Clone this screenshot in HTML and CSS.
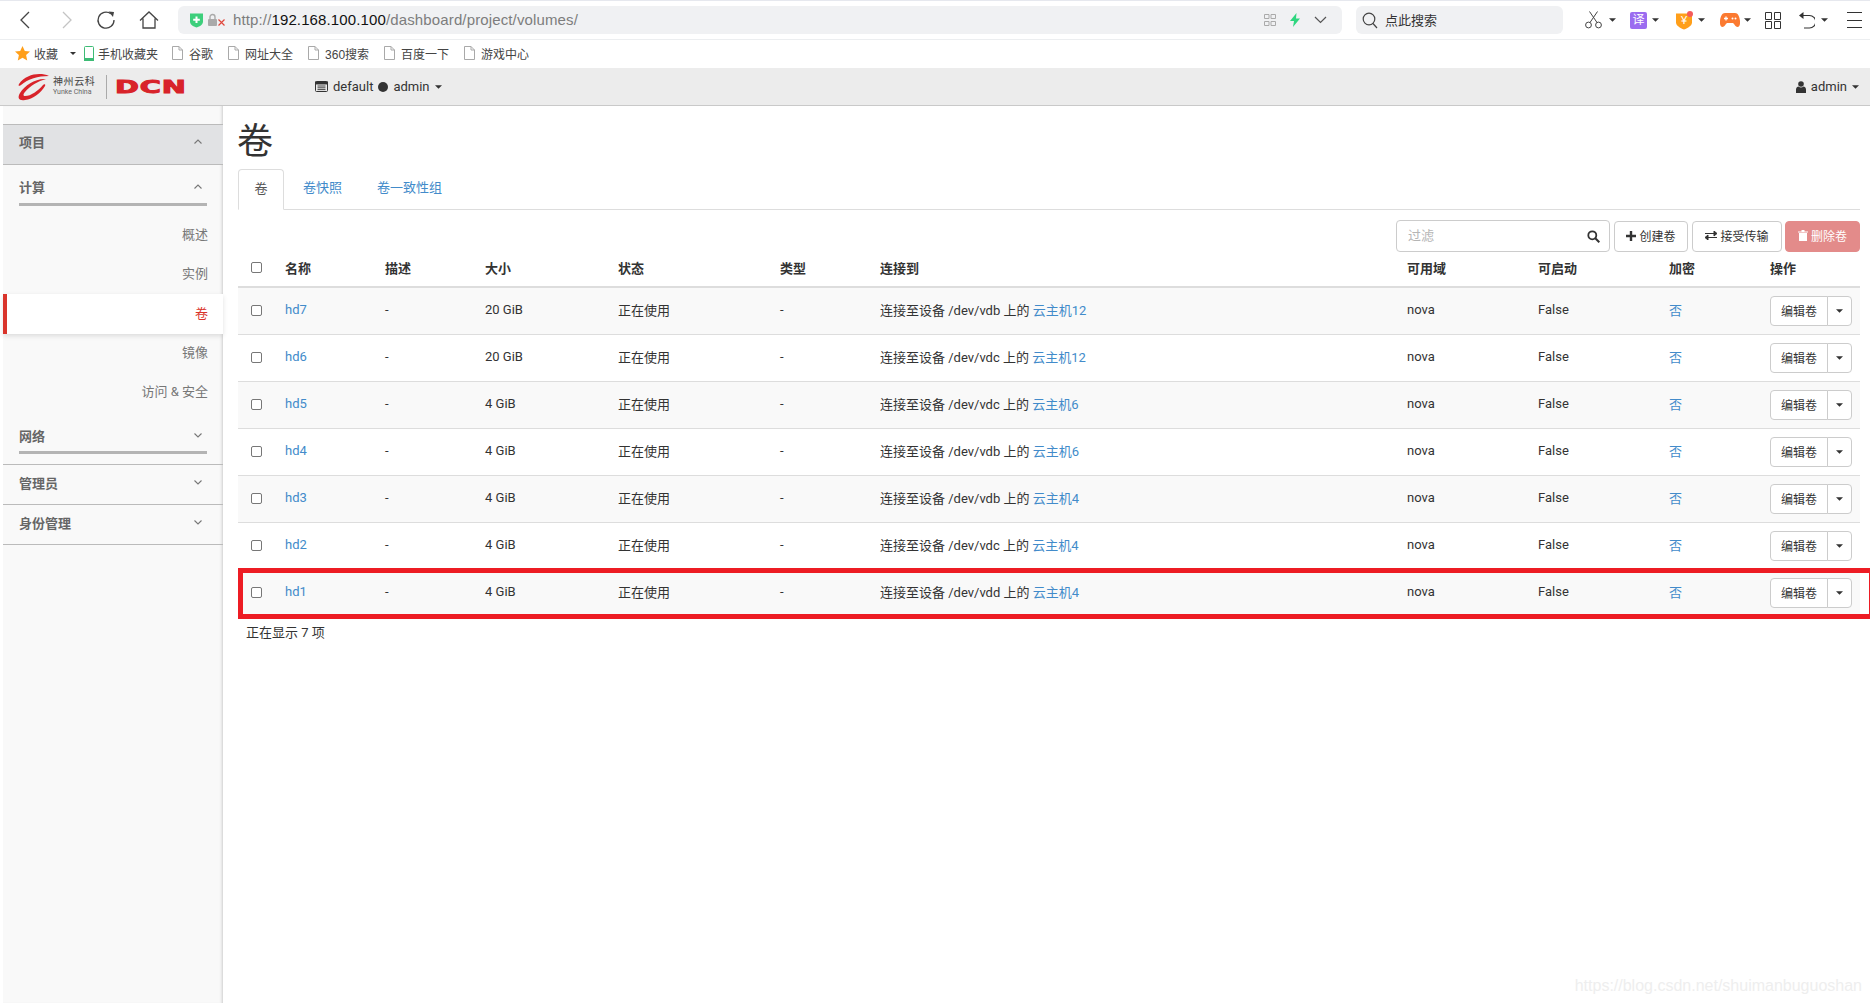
FILE: index.html
```html
<!DOCTYPE html>
<html lang="zh-CN">
<head>
    <meta charset="UTF-8" />
    <title>卷 - OpenStack Dashboard</title>
    <link rel="stylesheet" href="styles.css">
</head>
<body>
    <svg class="defs" width="0" height="0">
        <symbol id="doc" viewBox="0 0 11 14"><path d="M.5.5h6.500l3.500 3.500v9.500h-10z M7 .5v3.500h3.500" fill="none" stroke="#a9a9a9"/></symbol>
        <symbol id="chev-up" viewBox="0 0 8 5"><path d="M.5 4.500 4 1l3.500 3.500" fill="none" stroke="#777" stroke-width="1.100"/></symbol>
        <symbol id="chev-down" viewBox="0 0 8 5"><path d="M.5.500 4 4 7.500.5" fill="none" stroke="#777" stroke-width="1.100"/></symbol>
        <symbol id="caret" viewBox="0 0 8 4"><path d="M0 0h8L4 4z" fill="#333"/></symbol>
    </svg>

    <!-- BROWSER TOOLBAR -->
    <div class="browser-bar">
        <svg class="ico-back" width="10" height="18" viewBox="0 0 10 18"><path d="M9 1 1 9l8 8" fill="none" stroke="#444" stroke-width="1.300"/></svg>
        <svg class="ico-fwd" width="10" height="18" viewBox="0 0 10 18"><path d="m1 1 8 8-8 8" fill="none" stroke="#c4c4c4" stroke-width="1.300"/></svg>
        <svg class="ico-reload" width="20" height="20" viewBox="0 0 20 20"><path d="M14.800 3.800A8 8 0 1 0 18 10" fill="none" stroke="#444" stroke-width="1.300"/><path d="m12.500 1.500 5.500 .5-1 5z" fill="#444"/></svg>
        <svg class="ico-home" width="20" height="18" viewBox="0 0 20 18"><path d="M1 9.500 10 1l9 8.500M4 7.500v9.500h12V7.500" fill="none" stroke="#444" stroke-width="1.300"/></svg>
        <div class="url-bar">
            <svg class="ico-shield" width="15" height="16" viewBox="0 0 15 16"><path d="M1 1.500h13v8c0 3-3 5-6.500 6C4 14.500 1 12.500 1 9.500z" fill="#3dcf7c"/><path d="M7.500 4.500v6.500M4.200 7.700h6.600" stroke="#fff" stroke-width="2"/></svg>
            <svg class="ico-lock" width="18" height="14" viewBox="0 0 18 14"><rect x="0" y="6" width="9" height="7" rx="1" fill="#aaa"/><path d="M2 6V4a2.500 2.500 0 0 1 5 0v2" fill="none" stroke="#aaa" stroke-width="1.400"/><path d="m10.500 6.500 6 6m0-6-6 6" stroke="#e0473c" stroke-width="1.200"/></svg>
            <span class="url-text">http://<b>192.168.100.100</b>/dashboard/project/volumes/</span>
            <span class="url-right">
                <svg width="12" height="12" viewBox="0 0 12 12"><path d="M.5.500h4.500v4h-4.500zM7 .5h4.500v4H7zM.5 7.500h4.500v4h-4.500zM7 7.500h4.500v4H7z" fill="none" stroke="#aaa"/></svg>
                <svg width="10" height="14" viewBox="0 0 10 14"><path d="M6.500 0 0 8h4l-1 6 7-8.500H6z" fill="#2fd67f"/></svg>
                <svg width="13" height="8" viewBox="0 0 13 8"><path d="m1 1 5.500 5.500L12 1" fill="none" stroke="#555" stroke-width="1.200"/></svg>
            </span>
        </div>
        <div class="search-box">
            <svg width="16" height="17" viewBox="0 0 16 17"><circle cx="7" cy="7" r="5.800" fill="none" stroke="#444" stroke-width="1.200"/><path d="m11 11.500 4 4.500" stroke="#444" stroke-width="1.200"/></svg>
            <span>点此搜索</span>
        </div>
        <div class="tools">
            <span class="tool tool-cut"><svg width="17" height="18" viewBox="0 0 17 18"><circle cx="3.500" cy="14" r="2.900" fill="none" stroke="#444"/><circle cx="13.500" cy="14" r="2.900" fill="none" stroke="#444"/><path d="M5 11.500 12.500.5M12 11.500 4.500.5" stroke="#444" fill="none"/></svg><svg class="tool-caret"><use href="#caret"/></svg></span>
            <span class="tool tool-trans"><span class="trans-box">译</span><svg class="tool-caret"><use href="#caret"/></svg></span>
            <span class="tool tool-coin"><svg width="18" height="19" viewBox="0 0 18 19"><path d="M1 2.500h16v9c0 3-4 5.500-8 7-4-1.500-8-4-8-7z" fill="#ff9f1a"/><circle cx="15" cy="3" r="3" fill="#f45b5b"/><text x="9" y="13" class="coin-mark">¥</text></svg><svg class="tool-caret"><use href="#caret"/></svg></span>
            <span class="tool tool-game"><svg width="20" height="16" viewBox="0 0 20 16"><path d="M5 1h10c3 0 4.500 3.500 5 8 .3 3.500-.5 6-2.500 6-2 0-3-3-4.500-4H7c-1.500 1-2.500 4-4.500 4C.5 15-.3 12.500 0 9c.5-4.500 2-8 5-8z" fill="#fb7a31"/><path d="M6 4.500v4M4 6.500h4" stroke="#fff" stroke-width="1.300"/><circle cx="12.500" cy="6.500" r="1" fill="#fff"/><circle cx="15.500" cy="6.500" r="1" fill="#fff"/></svg><svg class="tool-caret"><use href="#caret"/></svg></span>
            <span class="tool tool-grid"><svg width="16" height="17" viewBox="0 0 16 17"><path d="M.5.500h6v7h-6zM9.500.500h6v7h-6zM.5 9.500h6v7h-6zM9.500 9.500h6v7h-6z" fill="none" stroke="#333"/></svg></span>
            <span class="tool tool-undo"><svg width="16" height="17" viewBox="0 0 16 17"><path d="M3 3.500h7.500a6 6 0 0 1 0 12.500H5" fill="none" stroke="#333" stroke-width="1.200"/><path d="M4.500 0 0 3.500 4.500 7z" fill="#333"/></svg><svg class="tool-caret"><use href="#caret"/></svg></span>
            <span class="tool tool-menu"><i></i><i></i><i></i></span>
        </div>
    </div>

    <!-- BOOKMARKS -->
    <div class="bookmarks">
        <span class="bm bm-fav">
            <svg width="15" height="15" viewBox="0 0 15 15"><path d="m7.500 0 2.300 5 5.200.6-3.900 3.500 1.100 5.400-4.700-2.800-4.700 2.800 1.100-5.400L0 5.600 5.200 5z" fill="#ff9f1a"/></svg>收藏
            <svg class="bm-caret"><use href="#caret"/></svg>
        </span>
        <span class="bm bm-phone"><svg width="10" height="15" viewBox="0 0 10 15"><rect x=".5" y=".5" width="9" height="14" rx="1" fill="none" stroke="#3dbb75"/><rect x="0" y="12" width="10" height="3" fill="#3dbb75"/></svg>手机收藏夹</span>
        <span class="bm"><svg width="11" height="14"><use href="#doc"/></svg>谷歌</span>
        <span class="bm"><svg width="11" height="14"><use href="#doc"/></svg>网址大全</span>
        <span class="bm"><svg width="11" height="14"><use href="#doc"/></svg>360搜索</span>
        <span class="bm"><svg width="11" height="14"><use href="#doc"/></svg>百度一下</span>
        <span class="bm"><svg width="11" height="14"><use href="#doc"/></svg>游戏中心</span>
    </div>

    <!-- DASHBOARD NAV -->
    <div class="topnav">
        <div class="logo">
            <svg width="34" height="28" viewBox="0 0 34 28"><path d="M33 3C24-1 10 1 3 11c-1 2 0 2.500 2 1C12 6 22 3 33 3z" fill="#d8232a"/><path d="M30 6C20 5 9 12 4 20c-3 5-1 8 5 7 8-1 16-7 20-14 1-2-1-2-2-1-5 6-12 11-18 11-2 0-2-2 0-4C14 13 22 8 30 6z" fill="#d8232a"/></svg>
            <div class="logo-cn">
                <span class="logo-name">神州云科</span>
                <span class="logo-en">Yunke China</span>
            </div>
            <span class="logo-sep"></span>
            <span class="logo-dcn">DCN</span>
        </div>
        <div class="project-picker">
            <svg width="13" height="11" viewBox="0 0 13 11"><rect x=".5" y=".5" width="12" height="10" rx="1" fill="none" stroke="#333"/><path d="M0 1h13v2H0zM2.500 5h8M2.500 6.800h8M2.500 8.600h8" stroke="#333" fill="#333" stroke-width=".9"/></svg>
            <span>default</span>
            <i class="dot"></i>
            <span>admin</span>
            <svg class="nav-caret"><use href="#caret"/></svg>
        </div>
        <div class="user-menu">
            <svg width="10" height="12" viewBox="0 0 10 12"><circle cx="5" cy="3" r="2.800" fill="#333"/><path d="M0 12V8.500C0 6.500 1.500 5.500 2.500 5.500c1.500 1.200 3.500 1.200 5 0 1 0 2.500 1 2.500 3V12z" fill="#333"/></svg>
            <span>admin</span>
            <svg class="nav-caret"><use href="#caret"/></svg>
        </div>
    </div>

    <div class="layout">
        <!-- SIDEBAR -->
        <div class="sidebar">
            <div class="side-head side-project">项目<svg class="chev"><use href="#chev-up"/></svg></div>
            <div class="side-group">
                <div class="side-sub">计算<svg class="chev"><use href="#chev-up"/></svg></div>
                <a class="side-link">概述</a>
                <a class="side-link">实例</a>
                <a class="side-link active">卷</a>
                <a class="side-link">镜像</a>
                <a class="side-link">访问 &amp; 安全</a>
                <div class="side-sub side-net">网络<svg class="chev"><use href="#chev-down"/></svg></div>
            </div>
            <div class="side-head">管理员<svg class="chev"><use href="#chev-down"/></svg></div>
            <div class="side-head">身份管理<svg class="chev"><use href="#chev-down"/></svg></div>
        </div>

        <!-- MAIN -->
        <div class="main">
            <h1>卷</h1>
            <div class="tabs">
                <a class="tab current">卷</a>
                <a class="tab">卷快照</a>
                <a class="tab">卷一致性组</a>
            </div>

            <div class="actions">
                <div class="filter">
                    <input type="text" placeholder="过滤">
                    <svg width="13" height="13" viewBox="0 0 13 13"><circle cx="5.300" cy="5.300" r="4" fill="none" stroke="#333" stroke-width="1.800"/><path d="m8.300 8.300 4 4" stroke="#333" stroke-width="2"/></svg>
                </div>
                <button class="btn btn-create"><svg width="10" height="10" viewBox="0 0 10 10"><path d="M5 0v10M0 5h10" stroke="#333" stroke-width="2.400"/></svg>创建卷</button>
                <button class="btn btn-accept"><svg width="12" height="9" viewBox="0 0 12 9"><path d="M0 2.500h10M12 2.500 9 0v5zM12 6.500H2M0 6.500 3 4v5z" stroke="#333" fill="#333" stroke-width="1"/></svg>接受传输</button>
                <button class="btn btn-delete"><svg width="10" height="11" viewBox="0 0 10 11"><path d="M0 1.500h10v1H0zM3.500 1.500V0h3v1.500zM1 3h8v8H1z" fill="#fff"/></svg>删除卷</button>
            </div>

            <div class="table-wrap">
                <table class="volumes">
                    <thead>
                        <tr>
                            <th class="c-check"><input type="checkbox"></th>
                            <th class="c-name">名称</th>
                            <th class="c-desc">描述</th>
                            <th class="c-size">大小</th>
                            <th class="c-status">状态</th>
                            <th class="c-type">类型</th>
                            <th class="c-attach">连接到</th>
                            <th class="c-zone">可用域</th>
                            <th class="c-boot">可启动</th>
                            <th class="c-enc">加密</th>
                            <th class="c-act">操作</th>
                        </tr>
                    </thead>
                    <tbody>
                        <tr>
                            <td class="cell-box"><input type="checkbox"></td><td><a>hd7</a></td><td>-</td><td>20 GiB</td><td>正在使用</td><td>-</td>
                            <td>连接至设备 /dev/vdb 上的 <a>云主机12</a></td><td>nova</td><td>False</td><td><a>否</a></td>
                            <td class="cell-box"><div class="split"><button>编辑卷</button><button class="split-caret"><svg><use href="#caret"/></svg></button></div></td>
                        </tr>
                        <tr>
                            <td class="cell-box"><input type="checkbox"></td><td><a>hd6</a></td><td>-</td><td>20 GiB</td><td>正在使用</td><td>-</td>
                            <td>连接至设备 /dev/vdc 上的 <a>云主机12</a></td><td>nova</td><td>False</td><td><a>否</a></td>
                            <td class="cell-box"><div class="split"><button>编辑卷</button><button class="split-caret"><svg><use href="#caret"/></svg></button></div></td>
                        </tr>
                        <tr>
                            <td class="cell-box"><input type="checkbox"></td><td><a>hd5</a></td><td>-</td><td>4 GiB</td><td>正在使用</td><td>-</td>
                            <td>连接至设备 /dev/vdc 上的 <a>云主机6</a></td><td>nova</td><td>False</td><td><a>否</a></td>
                            <td class="cell-box"><div class="split"><button>编辑卷</button><button class="split-caret"><svg><use href="#caret"/></svg></button></div></td>
                        </tr>
                        <tr>
                            <td class="cell-box"><input type="checkbox"></td><td><a>hd4</a></td><td>-</td><td>4 GiB</td><td>正在使用</td><td>-</td>
                            <td>连接至设备 /dev/vdb 上的 <a>云主机6</a></td><td>nova</td><td>False</td><td><a>否</a></td>
                            <td class="cell-box"><div class="split"><button>编辑卷</button><button class="split-caret"><svg><use href="#caret"/></svg></button></div></td>
                        </tr>
                        <tr>
                            <td class="cell-box"><input type="checkbox"></td><td><a>hd3</a></td><td>-</td><td>4 GiB</td><td>正在使用</td><td>-</td>
                            <td>连接至设备 /dev/vdb 上的 <a>云主机4</a></td><td>nova</td><td>False</td><td><a>否</a></td>
                            <td class="cell-box"><div class="split"><button>编辑卷</button><button class="split-caret"><svg><use href="#caret"/></svg></button></div></td>
                        </tr>
                        <tr>
                            <td class="cell-box"><input type="checkbox"></td><td><a>hd2</a></td><td>-</td><td>4 GiB</td><td>正在使用</td><td>-</td>
                            <td>连接至设备 /dev/vdc 上的 <a>云主机4</a></td><td>nova</td><td>False</td><td><a>否</a></td>
                            <td class="cell-box"><div class="split"><button>编辑卷</button><button class="split-caret"><svg><use href="#caret"/></svg></button></div></td>
                        </tr>
                        <tr>
                            <td class="cell-box"><input type="checkbox"></td><td><a>hd1</a></td><td>-</td><td>4 GiB</td><td>正在使用</td><td>-</td>
                            <td>连接至设备 /dev/vdd 上的 <a>云主机4</a></td><td>nova</td><td>False</td><td><a>否</a></td>
                            <td class="cell-box"><div class="split"><button>编辑卷</button><button class="split-caret"><svg><use href="#caret"/></svg></button></div></td>
                        </tr>
                    </tbody>
                </table>
                <!-- red box drawn over the last row -->
                <div class="highlight"></div>
            </div>
            <p class="count">正在显示 7 项</p>
            <div class="watermark">https://blog.csdn.net/shuimanbuguoshan</div>
        </div>
    </div>
</body>
</html>
```

FILE: styles.css
```css
* {
    margin: 0;
    padding: 0;
    box-sizing: border-box;
}

html, body {
    height: 1003px;
    overflow: hidden;
}

body {
    background: #fff;
    color: #333;
    font-family: Roboto, 'Noto Sans CJK SC', sans-serif;
    font-size: 13px;
    display: flex;
    flex-direction: column;
}

a {
    color: #428bca;
}

.defs {
    position: absolute;
}

/* browser toolbar */
.browser-bar {
    height: 40px;
    flex: none;
    display: flex;
    align-items: center;
    border-top: 1px solid #e6e8ee;
    border-bottom: 1px solid #eceef0;
    padding-left: 20px;
    font-family: 'Liberation Sans', 'Noto Sans CJK SC', sans-serif;
}

.ico-fwd {
    margin-left: 32px;
}

.ico-reload {
    margin-left: 24px;
}

.ico-home {
    margin-left: 23px;
}

.url-bar {
    width: 1164px;
    height: 28px;
    margin-left: 19px;
    background: #f0f1f3;
    border-radius: 6px;
    display: flex;
    align-items: center;
    padding-left: 11px;
}

.ico-lock {
    margin-left: 4px;
}

.url-text {
    margin-left: 7px;
    padding-bottom: 2px;
    font-size: 15px;
    letter-spacing: .13px;
    color: #7d7d7d;
}

.url-text b {
    font-weight: normal;
    color: #111;
}

.url-right {
    margin-left: auto;
    display: flex;
    align-items: center;
    gap: 14px;
    padding-right: 15px;
}

.search-box {
    width: 207px;
    height: 28px;
    margin-left: 14px;
    background: #f0f1f3;
    border-radius: 6px;
    display: flex;
    align-items: center;
    gap: 7px;
    padding-left: 6px;
    font-size: 13px;
}

.search-box span {
    padding-bottom: 2px;
}

.tools {
    display: flex;
    align-items: center;
    margin-left: 22px;
}

.tool {
    display: flex;
    align-items: center;
}

.tool-caret {
    width: 7px;
    height: 4px;
    margin-left: 5px;
}

.tool-cut .tool-caret {
    margin-left: 7px;
}

.tool-trans {
    margin-left: 14px;
}

.trans-box {
    width: 17px;
    height: 17px;
    background: #9b6cf0;
    border-radius: 2px;
    color: #fff;
    font-size: 12px;
    line-height: 17px;
    text-align: center;
}

.tool-coin {
    margin-left: 16px;
}

.coin-mark {
    font-size: 11px;
    fill: #fff;
    text-anchor: middle;
}

.tool-game {
    margin-left: 15px;
}

.tool-game .tool-caret {
    margin-left: 4px;
}

.tool-grid {
    margin-left: 14px;
}

.tool-undo {
    margin-left: 18px;
}

.tool-undo .tool-caret {
    margin-left: 6px;
}

.tool-menu {
    margin-left: 19px;
    flex-direction: column;
    gap: 6.5px;
}

.tool-menu i {
    width: 15px;
    height: 1px;
    background: #333;
}

/* bookmarks */
.bookmarks {
    height: 28px;
    flex: none;
    display: flex;
    align-items: center;
    padding: 0 0 2px 15px;
    font-family: 'Liberation Sans', 'Noto Sans CJK SC', sans-serif;
    font-size: 12px;
    color: #444;
}

.bm {
    display: flex;
    align-items: center;
    gap: 6px;
    margin-right: 15px;
}

.bm-fav {
    gap: 4px;
    margin-right: 8px;
}

.bm-caret {
    width: 6px;
    height: 3px;
    margin-left: 8px;
}

.bm-phone {
    gap: 4px;
    margin-right: 14px;
}

/* dashboard nav */
.topnav {
    height: 38px;
    flex: none;
    display: flex;
    align-items: center;
    background: #ececec;
    border-bottom: 1px solid #c9c9c9;
    padding-left: 16px;
}

.logo {
    width: 299px;
    display: flex;
    align-items: center;
    flex: none;
}

.logo-cn {
    display: flex;
    flex-direction: column;
    margin-left: 3px;
    width: 43px;
    line-height: 10px;
    color: #444;
}

.logo-name {
    font-size: 10px;
    letter-spacing: .6px;
}

.logo-en {
    font-size: 7px;
    white-space: nowrap;
    color: #666;
}

.logo-sep {
    width: 1px;
    height: 24px;
    background: #aaa;
    margin-left: 10px;
}

.logo-dcn {
    margin-left: 8px;
    color: #d8232a;
    font-family: 'DejaVu Sans', sans-serif;
    font-weight: bold;
    font-size: 18px;
    line-height: 18px;
    letter-spacing: .5px;
    -webkit-text-stroke: 1px #d8232a;
    transform: scaleX(1.6);
    transform-origin: left center;
}

.project-picker, .user-menu {
    display: flex;
    align-items: center;
    gap: 5px;
}

.dot {
    width: 10px;
    height: 10px;
    background: #333;
    border-radius: 50%;
}

.nav-caret {
    width: 7px;
    height: 4px;
}

.user-menu {
    margin-left: auto;
    padding-right: 11px;
}

/* layout */
.layout {
    flex: 1;
    display: flex;
    min-height: 0;
}

.sidebar {
    width: 220px;
    flex: none;
    margin-left: 3px;
    padding-top: 18px;
    background: #f9f9f9;
    box-shadow: inset -3px 0 3px -2px #ccc;
    color: #666;
}

.side-head {
    height: 40px;
    display: flex;
    align-items: center;
    justify-content: space-between;
    padding: 0 21px 4px 16px;
    border-bottom: 1px solid #bbb;
    font-weight: bold;
}

.side-project {
    height: 41px;
    padding-bottom: 6px;
    background: #e1e2e4;
    border-top: 1px solid #bbb;
}

.side-group {
    border-bottom: 1px solid #bbb;
}

.side-sub {
    height: 41px;
    margin: 0 16px;
    padding: 5px 5px 0 0;
    display: flex;
    align-items: center;
    justify-content: space-between;
    border-bottom: 3px solid #b4b4b4;
    font-weight: bold;
}

.side-net {
    height: 42px;
    padding-top: 7px;
    margin-bottom: 10px;
}

.chev {
    width: 8px;
    height: 5px;
}

.side-link {
    display: block;
    height: 39px;
    line-height: 37px;
    text-align: right;
    padding-right: 15px;
    color: #777;
}

.side-sub + .side-link {
    margin-top: 10px;
}

.side-link.active {
    height: 40px;
    line-height: 40px;
    background: #fff;
    color: #d9342b;
    border-left: 4px solid #d9342b;
    box-shadow: 0 2px 5px rgba(0, 0, 0, 0.12);
    position: relative;
}

.main {
    flex: 1;
    padding: 12px 10px 0 15px;
    position: relative;
    min-width: 0;
}

h1 {
    font-size: 36px;
    font-weight: 400;
    line-height: 49px;
    margin: 0 0 2px -1px;
    color: #333;
}

.tabs {
    display: flex;
    height: 41px;
    border-bottom: 1px solid #ddd;
}

.tab {
    height: 41px;
    line-height: 38px;
    padding: 0 18px;
    font-size: 13px;
    margin-right: -1px;
}

.tab.current {
    width: 46px;
    padding: 0;
    text-align: center;
    color: #555;
    background: #fff;
    border: 1px solid #ddd;
    border-bottom-color: #fff;
    border-radius: 4px 4px 0 0;
    margin-right: 1px;
}

.actions {
    display: flex;
    justify-content: flex-end;
    gap: 4px;
    margin-top: 10px;
    height: 32px;
}

.filter {
    width: 214px;
    position: relative;
}

.filter input {
    width: 100%;
    height: 32px;
    border: 1px solid #ccc;
    border-radius: 4px;
    padding: 0 30px 2px 11px;
    font: inherit;
    outline: none;
}

.filter input::placeholder {
    color: #b5b5b5;
}

.filter svg {
    position: absolute;
    right: 10px;
    top: 10px;
}

.btn {
    height: 31px;
    margin-top: 1px;
    padding-bottom: 2px;
    border: 1px solid #ccc;
    border-radius: 4px;
    background: #fff;
    color: #333;
    font-family: inherit;
    font-size: 12px;
    display: flex;
    align-items: center;
    justify-content: center;
    gap: 3px;
}

.btn-create {
    width: 74px;
}

.btn-accept {
    width: 90px;
}

.btn-delete {
    width: 75px;
    margin-left: -1px;
    background: #e38b8a;
    border-color: #e38b8a;
    color: #fff;
}

.table-wrap {
    position: relative;
}

.volumes {
    width: 1622px;
    table-layout: fixed;
    border-collapse: collapse;
}

.volumes th {
    height: 35px;
    text-align: left;
    font-weight: bold;
    padding: 0 8px 3px;
    border-bottom: 2px solid #ddd;
    color: #333;
}

.volumes td {
    height: 47px;
    padding: 0 8px 2px;
    border-bottom: 1px solid #ddd;
}

.volumes td.cell-box {
    padding-bottom: 0;
}

.volumes tbody tr:nth-child(odd) {
    background: #f9f9f9;
}

.volumes input[type=checkbox] {
    appearance: none;
    display: block;
    width: 11px;
    height: 11px;
    margin-left: 5px;
    border: 1px solid #777;
    border-radius: 2px;
    background: #fff;
}

.c-check { width: 39px; }
.c-name { width: 100px; }
.c-desc { width: 100px; }
.c-size { width: 133px; }
.c-status { width: 162px; }
.c-type { width: 100px; }
.c-attach { width: 527px; }
.c-zone { width: 131px; }
.c-boot { width: 131px; }
.c-enc { width: 101px; }
.c-act { width: 98px; }

.split {
    display: flex;
    width: 82px;
    height: 30px;
}

.split button {
    width: 58px;
    background: #fff;
    border: 1px solid #ccc;
    border-radius: 4px 0 0 4px;
    font-family: inherit;
    font-size: 12px;
    color: #333;
}

.split .split-caret {
    width: 25px;
    margin-left: -1px;
    border-radius: 0 4px 4px 0;
    display: flex;
    align-items: center;
    justify-content: center;
}

.split-caret svg {
    width: 7px;
    height: 4px;
}

.highlight {
    position: absolute;
    left: 0;
    right: -10px;
    bottom: -2px;
    height: 51px;
    border: 5px solid #ed1c24;
    border-right-width: 1px;
}

.count {
    margin: 7px 0 0 8px;
    line-height: 18px;
}

.watermark {
    position: absolute;
    right: 8px;
    bottom: 8px;
    color: #eee;
    font-family: 'Liberation Sans', sans-serif;
    font-size: 16px;
}
```
